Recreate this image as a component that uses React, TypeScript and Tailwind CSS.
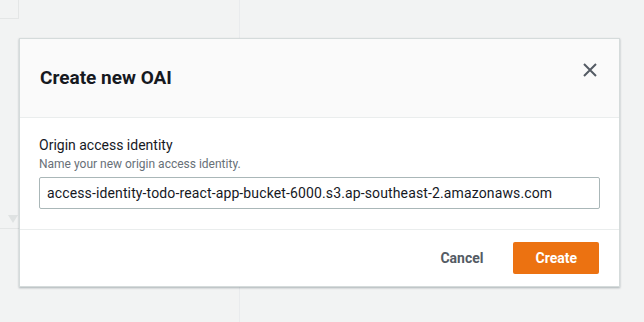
import React from 'react';

const CloseIcon: React.FC = () => (
  <svg width="14" height="14" viewBox="0 0 14 14" fill="none" stroke="currentColor" strokeWidth={2}>
    <path d="M1 1l12 12M13 1L1 13" />
  </svg>
);

const App: React.FC = () => {
  return (
    <div
      className="relative w-[644px] h-[322px] overflow-hidden bg-[#f2f3f3]"
      style={{ fontFamily: 'Roboto, "Noto Sans", sans-serif' }}
    >
      {/* page behind the modal */}
      <div className="flex h-full">
        <div className="w-[240px] border-r border-[#e9ebed] flex flex-col">
          <div className="h-[19px] w-[19px] border-r border-b border-[#e4e6e6]" />
          <div className="mt-[190px] h-[20px] flex items-center border-b border-[#e4e6e6] pl-[8px]">
            <span className="w-0 h-0 border-l-[5px] border-r-[5px] border-t-[8px] border-l-transparent border-r-transparent border-t-[#dfe2e2]" />
          </div>
        </div>
        <div className="flex-1" />
      </div>

      {/* modal */}
      <div className="absolute left-[19px] top-[38px] w-[601px] bg-white border border-[#d5dbdb] shadow-[0_1px_2px_rgba(0,28,36,0.3)]">
        <div className="h-[79px] bg-[#fafafa] border-b border-[#eaeded] flex items-center justify-between pl-[20px] pr-[22px]">
          <h2 className="text-[19px] font-bold text-[#16191f]">Create new OAI</h2>
          <span className="text-[#545b64] -mt-[16px]">
            <CloseIcon />
          </span>
        </div>
        <div className="px-[19px] pt-[16px] pb-[20px] border-b border-[#eaeded]">
          <div className="text-[14px] leading-[22px] text-[#16191f]">Origin access identity</div>
          <div className="text-[12px] leading-[16px] text-[#687078]">Name your new origin access identity.</div>
          <input
            readOnly
            value="access-identity-todo-react-app-bucket-6000.s3.ap-southeast-2.amazonaws.com"
            className="mt-[5px] w-full h-[32px] px-[7px] border border-[#aab7b8] rounded-[2px] text-[14px] tracking-[0.13px] text-[#16191f] outline-none"
            style={{ fontFamily: 'Roboto, "Noto Sans", sans-serif' }}
          />
        </div>
        <div className="h-[56px] flex items-center justify-end gap-[10px] pr-[20px]">
          <button className="px-[20px] h-[32px] text-[14px] font-bold text-[#545b64]">Cancel</button>
          <button className="px-[22px] h-[32px] rounded-[2px] bg-[#ec7211] text-[14px] font-bold text-white">
            Create
          </button>
        </div>
      </div>
    </div>
  );
};

export default App;
